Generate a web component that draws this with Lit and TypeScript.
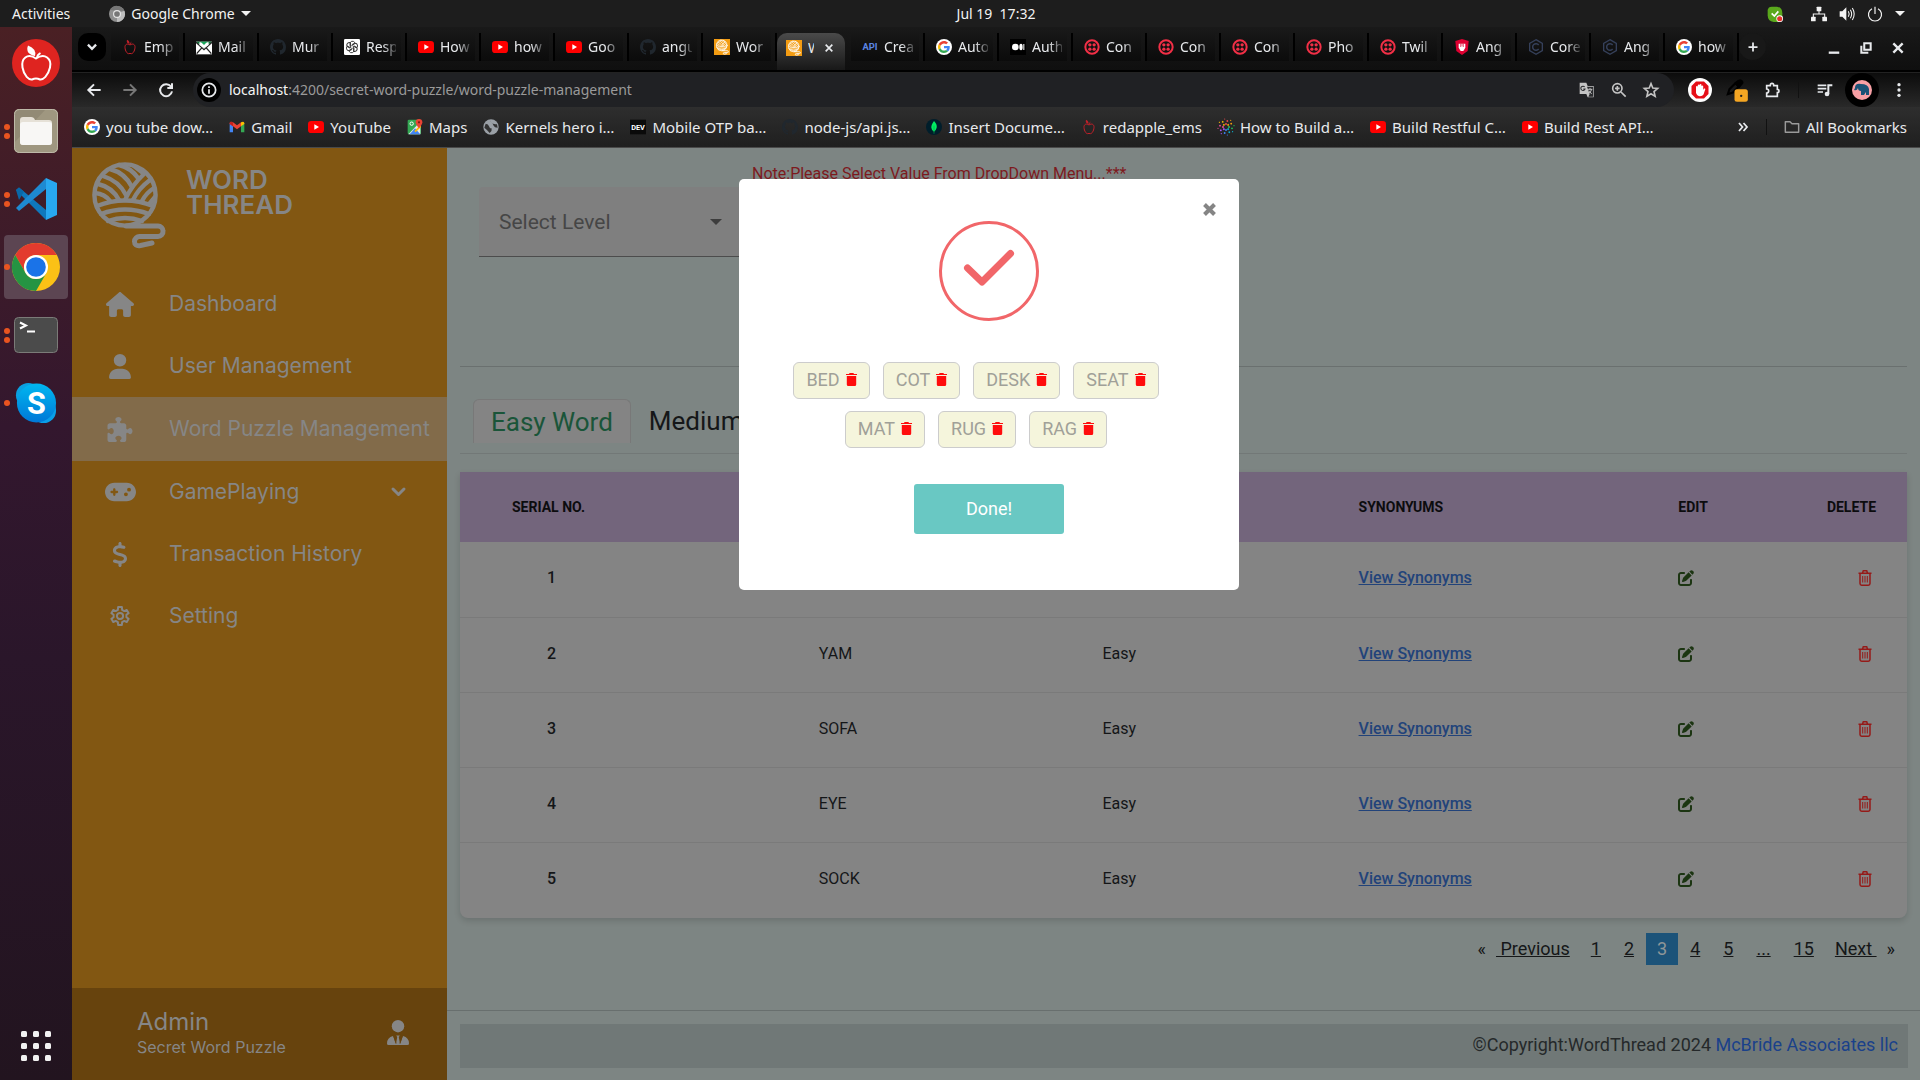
import { LitElement, html, svg, css, TemplateResult } from "lit";
import { customElement, property, state } from "lit/decorators.js";
import { classMap } from "lit/directives/class-map.js";

type Glyph = { box: string; art: TemplateResult };

const gear = (): string => {
  const points: string[] = [];
  for (let tooth = 0; tooth < 6; tooth++) {
    for (const [offset, radius] of [[-19, 7.2], [-12, 10], [12, 10], [19, 7.2]]) {
      const angle = ((tooth * 60 + offset - 90) * Math.PI) / 180;
      points.push(`${(12 + radius * Math.cos(angle)).toFixed(2)} ${(12 + radius * Math.sin(angle)).toFixed(2)}`);
    }
  }
  return `M${points.join("L")}Z`;
};

const yarn = svg`
  <g fill="none" stroke="currentColor" stroke-width="4.4" stroke-linecap="round">
    <circle cx="33" cy="33" r="30.6"/>
    <path d="M5 44Q33 33 61 44M9 52Q33 43 57 52M16 59Q33 53 50 59"/>
    <path d="M3 31Q13 32 18 39M6 22Q20 25 27 38M11 14Q27 19 34 33M18 7Q33 11 40 25M27 3Q39 6 46 16"/>
    <path d="M33 38Q39 24 53 11M41 38Q46 27 58 18M50 39Q54 31 62 26M58 41L63 35M42 4L51 11"/>
    <path d="M34 64H66a5 5 0 0 1 5 5a5 5 0 0 1-5 5.500H48a5 5 0 0 0-5.500 5q0 5 6 4L60 81" stroke-width="5"/>
  </g>`;

const apple = svg`
  <g fill="none" stroke="currentColor" stroke-width="1.500">
    <path d="M12 9C8 6 4 8 4.500 13s3 9 5.500 9q2-.8 4 0c2.500 0 5-4 5.500-9S16 6 12 9Z"/>
    <path d="M12 8q0-2 2-3" />
  </g><path d="M11 7Q6 6 7.500 1Q12 3 11 7Z" fill="currentColor"/>`;

const twilio = svg`<circle cx="12" cy="12" r="10" fill="none" stroke="#f22f46" stroke-width="3"/>
  <g fill="#f22f46"><circle cx="8.800" cy="8.800" r="2.500"/><circle cx="15.200" cy="8.800" r="2.500"/><circle cx="8.800" cy="15.200" r="2.500"/><circle cx="15.200" cy="15.200" r="2.500"/></g>`;

const octocat = "M8 0C3.58 0 0 3.58 0 8c0 3.54 2.29 6.53 5.47 7.59.4.07.55-.17.55-.38 0-.19-.01-.82-.01-1.49-2.01.37-2.53-.49-2.69-.94-.09-.23-.48-.94-.82-1.13-.28-.15-.68-.52-.01-.53.63-.01 1.08.58 1.23.82.72 1.21 1.87.87 2.33.66.07-.52.28-.87.51-1.07-1.78-.2-3.64-.89-3.64-3.95 0-.87.31-1.59.82-2.15-.08-.2-.36-1.02.08-2.12 0 0 .67-.21 2.2.82.64-.18 1.32-.27 2-.27s1.36.09 2 .27c1.53-1.04 2.2-.82 2.2-.82.44 1.1.16 1.92.08 2.12.51.56.82 1.27.82 2.15 0 3.07-1.87 3.75-3.65 3.95.29.25.54.73.54 1.48 0 1.07-.01 1.93-.01 2.2 0 .21.15.46.55.38A8.01 8.01 0 0 0 16 8c0-4.42-3.58-8-8-8z";

const googleG = svg`
  <circle cx="24" cy="24" r="24" fill="#fff"/>
  <g transform="translate(6 6) scale(.75)">
    <path fill="#EA4335" d="M24 9.500c3.540 0 6.710 1.220 9.210 3.600l6.850-6.850C35.900 2.380 30.470 0 24 0 14.620 0 6.510 5.380 2.560 13.220l7.980 6.190C12.430 13.720 17.740 9.500 24 9.500z"/>
    <path fill="#4285F4" d="M46.980 24.550c0-1.570-.15-3.090-.38-4.550H24v9.020h12.940c-.58 2.960-2.260 5.480-4.780 7.180l7.730 6c4.510-4.180 7.090-10.360 7.090-17.650z"/>
    <path fill="#FBBC05" d="M10.530 28.590c-.48-1.450-.76-2.990-.76-4.590s.27-3.140.76-4.590l-7.980-6.190C.92 16.460 0 20.120 0 24c0 3.880.92 7.540 2.560 10.780l7.970-6.190z"/>
    <path fill="#34A853" d="M24 48c6.480 0 11.930-2.130 15.890-5.810l-7.730-6c-2.150 1.450-4.920 2.300-8.160 2.300-6.260 0-11.570-4.220-13.470-9.910l-7.980 6.190C6.510 42.620 14.620 48 24 48z"/>
  </g>`;

const coreC = svg`<path d="M12 1L21.500 6.500V17.500L12 23L2.500 17.500V6.500Z" fill="none" stroke="#35405a" stroke-width="2"/><path d="M16 9a5 5 0 1 0 0 6" fill="none" stroke="#35405a" stroke-width="2.200"/>`;

const glyphs: Record<string, Glyph> = {
  down: { box: "0 0 24 24", art: svg`<path d="M5 8L12 15L19 8" fill="none" stroke="currentColor" stroke-width="4"/>` },
  expand: { box: "0 0 15 10", art: svg`<path d="M2 2L7.500 7.500L13 2" fill="none" stroke="currentColor" stroke-width="3" stroke-linecap="round" stroke-linejoin="round"/>` },
  caret: { box: "0 0 12 6", art: svg`<path d="M0 0H12L6 6Z" fill="currentColor"/>` },
  close: { box: "0 0 24 24", art: svg`<path d="M4 4L20 20M20 4L4 20" fill="none" stroke="currentColor" stroke-width="4"/>` },
  cross: { box: "0 0 13 13", art: svg`<path d="M1.500 1.500L11.500 11.500M11.500 1.500L1.500 11.500" fill="none" stroke="currentColor" stroke-width="4"/>` },
  plus: { box: "0 0 24 24", art: svg`<path d="M12 3V21M3 12H21" fill="none" stroke="currentColor" stroke-width="3.500"/>` },
  minimize: { box: "0 0 24 24", art: svg`<path d="M3 20H21" fill="none" stroke="currentColor" stroke-width="4"/>` },
  restore: { box: "0 0 24 24", art: svg`<path d="M9 4H20V15H9ZM4 8V20H16" fill="none" stroke="currentColor" stroke-width="3.500"/>` },
  back: { box: "0 0 24 24", art: svg`<path d="M22 12H4M12 3.500L3.500 12L12 20.500" fill="none" stroke="currentColor" stroke-width="3"/>` },
  forward: { box: "0 0 24 24", art: svg`<path d="M2 12H20M12 3.500L20.500 12L12 20.500" fill="none" stroke="currentColor" stroke-width="3"/>` },
  reload: { box: "0 0 24 24", art: svg`<path d="M19.500 7A9 9 0 1 0 21 14M21 2V9H14" fill="none" stroke="currentColor" stroke-width="3"/>` },
  info: { box: "0 0 24 24", art: svg`<circle cx="12" cy="12" r="10" fill="none" stroke="currentColor" stroke-width="2.600"/><path d="M12 11V17.500M12 6.500V9" stroke="currentColor" stroke-width="2.600"/>` },
  translate: { box: "0 0 24 24", art: svg`<path d="M1 1H11L13 6H22V23H13L11 18H1Z" fill="#c4c4c4"/><path d="M12 7H21V22H14L16 18Z" fill="#2a2b2e"/><path d="M8.500 7.500A3.200 3.200 0 1 0 9 10.500H6.500" fill="none" stroke="#2a2b2e" stroke-width="1.600"/><path d="M13 11H20M16.500 9V11M19 11Q18 15 14 17M15 13L19 18" fill="none" stroke="#c4c4c4" stroke-width="1.400"/>` },
  zoomin: { box: "0 0 24 24", art: svg`<circle cx="9.500" cy="9.500" r="7" fill="none" stroke="currentColor" stroke-width="2.500"/><path d="M15 15L22 22M9.500 6V13M6 9.500H13" fill="none" stroke="currentColor" stroke-width="2.500"/>` },
  star: { box: "0 0 24 24", art: svg`<path d="M12 2.500L14.700 9L22 9.600L16.500 14.300L18.200 21.500L12 17.600L5.800 21.500L7.500 14.300L2 9.600L9.300 9Z" fill="none" stroke="currentColor" stroke-width="2.400"/>` },
  block: { box: "0 0 24 24", art: svg`<circle cx="12" cy="12" r="12" fill="#fff"/><path d="M8 3.500H16L20.500 8V16L16 20.500H8L3.500 16V8Z" fill="#e60f17"/><path d="M8 12V8.500a1 1 0 0 1 1.800 0V7a1 1 0 0 1 1.800 0V6.500a1 1 0 0 1 1.800 0V8a1 1 0 0 1 1.800 0V12l.8-1.400q1.300-.6 1.300.7L15.500 16.500q-1 1.800-3.500 1.800T8 15Z" fill="#fff"/>` },
  dropper: { box: "0 0 24 24", art: svg`<path d="M1 17L3 11L10 4L14 8L7 15Z" fill="none" stroke="#000" stroke-width="2.500"/><path d="M9 3L13 0Q17-2 19 1T18 6L15 10Z" fill="#000"/><rect x="9" y="11" width="16" height="15" rx="3" fill="#f5a623"/><circle cx="17" cy="19" r="1.400" fill="#222"/>` },
  extension: { box: "0 0 24 24", art: svg`<path d="M4 5.500H9.500V4.500a2.500 2.500 0 0 1 5 0V5.500H20V11a2.500 2.500 0 0 1 0 5V21.500H4V16.500a3 3 0 0 0 0-6Z" fill="none" stroke="currentColor" stroke-width="2.500"/>` },
  queue: { box: "0 0 24 24", art: svg`<path d="M1 5H14M1 10H14M1 15H9" fill="none" stroke="currentColor" stroke-width="2.500"/><path d="M17 18V5H23" fill="none" stroke="currentColor" stroke-width="3"/><circle cx="15" cy="18" r="3.500" fill="currentColor"/>` },
  avatar: { box: "0 0 34 34", art: svg`<circle cx="17" cy="17" r="17" fill="#000"/><circle cx="17" cy="17" r="10" fill="#f8a0a5"/><path d="M10 15q0-5 6-4q7 0 8 5v6h-3v-3l-2 3h-3v-4q-3 0-3-3q-1 3-4 2z" fill="#1a5276"/>` },
  more: { box: "0 0 24 24", art: svg`<g fill="currentColor"><circle cx="12" cy="4" r="2.500"/><circle cx="12" cy="12" r="2.500"/><circle cx="12" cy="20" r="2.500"/></g>` },
  chevrons: { box: "0 0 24 24", art: svg`<path d="M4 4L11 12L4 20M13 4L20 12L13 20" fill="none" stroke="currentColor" stroke-width="3.500"/>` },
  folder: { box: "0 0 24 24", art: svg`<path d="M2 20V4H9L12 7H22V20Z" fill="none" stroke="#9a9a9a" stroke-width="2.200" stroke-linejoin="round"/>` },

  apple: { box: "0 0 24 24", art: svg`<g color="#c2212a">${apple}</g>` },
  mail: { box: "0 0 24 24", art: svg`<rect y="4" width="24" height="19" fill="#fff"/><path d="M0 4H24L12 14Z" fill="#0b7a3b"/><path d="M0 5L12 16L24 5M1 22L9 13M23 22L15 13" fill="none" stroke="#222" stroke-width="2"/><path d="M5 9V5H19V9L12 14Z" fill="#fff"/><path d="M7 4L12 9L17 4" fill="#19a55a"/>` },
  github: { box: "0 0 16 16", art: svg`<path d=${octocat} fill="#20272e"/>` },
  openai: { box: "0 0 24 24", art: svg`<rect width="24" height="24" rx="2" fill="#fff"/><g fill="none" stroke="#333" stroke-width="1.400">${[0, 60, 120, 180, 240, 300].map((turn) => svg`<path transform="rotate(${turn} 12 12)" d="M9 10.300V5.800Q10.500 2.500 14 3.500Q16.500 4.500 16.300 7L11 10.200"/>`)}</g>` },
  youtube: { box: "0 0 24 24", art: svg`<rect y="3" width="24" height="18" rx="5" fill="#f00"/><path d="M9.500 8L16.500 12L9.500 16Z" fill="#fff"/>` },
  yarn: { box: "0 0 24 24", art: svg`<rect width="24" height="24" fill="#f39c12"/><g transform="translate(3 1) scale(.26)" color="#fff">${yarn}</g>` },
  api: { box: "0 0 24 24", art: svg`<text x="12" y="17" text-anchor="middle" class="mark" fill="#5b86e5" font-size="14">API</text>` },
  dev: { box: "0 0 24 24", art: svg`<rect y="1" width="24" height="22" fill="#0a0a0a"/><text x="12" y="16" text-anchor="middle" class="mark" fill="#fff" font-size="11">DEV</text>` },
  google: { box: "0 0 48 48", art: googleG },
  medium: { box: "0 0 24 24", art: svg`<rect width="24" height="24" fill="#000"/><circle cx="8" cy="12" r="5" fill="#fff"/><ellipse cx="16.500" cy="12" rx="2.500" ry="4.800" fill="#fff"/><rect x="20" y="7.500" width="1.500" height="9" fill="#fff"/>` },
  twilio: { box: "0 0 24 24", art: twilio },
  shield: { box: "0 0 24 24", art: svg`<path d="M2 3L12 0L22 3L20.500 18L12 24L3.500 18Z" fill="#dd0031"/><path d="M7 7H17V13L14 18H10L7 13Z" fill="#fff"/><path d="M10 7V12M14 7V12M12 7V11" stroke="#dd0031" stroke-width="1"/>` },
  core: { box: "0 0 24 24", art: coreC },
  gmail: { box: "0 0 24 24", art: svg`<path d="M1 6V20H6V11Z" fill="#4285f4"/><path d="M23 6V20H18V11Z" fill="#34a853"/><path d="M1 6Q2 2.500 6 5L12 9.500L18 5V11L12 15.500L6 11V11L1 7Z" fill="#ea4335"/><path d="M18 5Q22 2.500 23 6V7.500L18 11Z" fill="#fbbc04"/><path d="M1 6Q2 3 6 5V11L1 7.500Z" fill="#c5221f"/>` },
  maps: { box: "0 0 24 24", art: svg`<rect x="1" y="1" width="20" height="22" rx="2" fill="#34a853"/><path d="M2 23L20 4V23Z" fill="#e8eaed"/><path d="M4 23L12 14L20 23Z" fill="#4285f4"/><path d="M21 8L11 18L13 20L21 12Z" fill="#fbbc04"/><circle cx="7" cy="7" r="2.500" fill="none" stroke="#fff" stroke-width="1.500"/><path d="M18 0a5 5 0 0 1 5 5q0 3-5 9q-5-6-5-9a5 5 0 0 1 5-5Z" fill="#ea4335"/><circle cx="18" cy="5" r="1.700" fill="#7b1c13"/>` },
  globe: { box: "0 0 24 24", art: svg`<circle cx="12" cy="12" r="11.500" fill="#9aa0a6"/><path d="M4 7Q8 7 9 11T13 14Q14 18 10 21Q5 15 2 13ZM12 2Q11 6 15 7T21 8L22 13Q17 13 16 10T12 5Z" fill="#333"/>` },
  mongo: { box: "0 0 24 24", art: svg`<circle cx="12" cy="12" r="12" fill="#001e2b"/><path d="M12 3Q17 8 16 13Q15 17 12 19Q8.500 17 8 13T12 3Z" fill="#00ed64"/><path d="M12 10V22" stroke="#00a84a" stroke-width="1"/>` },
  burst: { box: "0 0 24 24", art: svg`${["#e5484d", "#f59e0b", "#22c55e", "#06b6d4", "#3b82f6", "#a855f7", "#ec4899", "#eab308"].map((tone, i) => svg`<g fill=${tone} transform="rotate(${i * 45} 12 12)"><circle cx="12" cy="7.500" r="1.500"/><circle cx="14" cy="3" r="1.400"/><circle cx="10" cy="0" r=".9"/></g>`)}` },

  house: { box: "0 0 576 512", art: svg`<path fill="currentColor" d="M575.800 255.500c0 18-15 32.100-32 32.100h-32l.7 160.200c0 2.700-.2 5.400-.5 8.100V472c0 22.100-17.900 40-40 40H392c-22.100 0-40-17.900-40-40V384c0-17.700-14.300-32-32-32H256c-17.700 0-32 14.300-32 32v88c0 22.100-17.900 40-40 40H104c-22.100 0-40-17.900-40-40V287.600H32c-18 0-32-14-32-32.100c0-9 3-17 10-24L266.400 8c7-7 15-8 22-8s15 2 21 7L564.800 231.500c8 7 12 15 11 24z"/>` },
  user: { box: "0 0 448 512", art: svg`<path fill="currentColor" d="M224 256A128 128 0 1 0 224 0a128 128 0 1 0 0 256zm-45.700 48C79.800 304 0 383.800 0 482.300C0 498.700 13.300 512 29.700 512H418.300c16.400 0 29.700-13.300 29.700-29.700C448 383.800 368.200 304 269.700 304H178.300z"/>` },
  puzzle: { box: "0 0 512 512", art: svg`<path fill="currentColor" d="M192 104.800c0-9.200-5.800-17.300-13.200-22.800C167.200 73.300 160 61.300 160 48c0-26.500 28.700-48 64-48s64 21.500 64 48c0 13.300-7.200 25.300-18.800 34c-7.400 5.500-13.200 13.600-13.200 22.800c0 12.800 10.400 23.200 23.200 23.200H336c26.500 0 48 21.500 48 48v56.800c0 12.800 10.400 23.200 23.200 23.200c9.200 0 17.300-5.800 22.800-13.200c8.700-11.600 20.700-18.800 34-18.800c26.500 0 48 28.700 48 64s-21.500 64-48 64c-13.300 0-25.300-7.200-34-18.800c-5.500-7.400-13.600-13.200-22.800-13.200c-12.800 0-23.200 10.400-23.200 23.200V464c0 26.500-21.500 48-48 48H279.200c-12.800 0-23.200-10.400-23.200-23.200c0-9.200 5.800-17.300 13.200-22.800c11.600-8.700 18.800-20.700 18.800-34c0-26.500-28.700-48-64-48s-64 21.500-64 48c0 13.300 7.200 25.300 18.800 34c7.400 5.500 13.200 13.600 13.200 22.800c0 12.800-10.400 23.200-23.200 23.200H48c-26.500 0-48-21.500-48-48V343.200C0 330.400 10.400 320 23.200 320c9.200 0 17.300 5.800 22.800 13.200C54.700 344.800 66.700 352 80 352c26.500 0 48-28.700 48-64s-21.500-64-48-64c-13.300 0-25.300 7.200-34 18.800C40.500 250.200 32.400 256 23.200 256C10.400 256 0 245.600 0 232.800V176c0-26.500 21.500-48 48-48H168.800c12.800 0 23.200-10.400 23.200-23.200z"/>` },
  gamepad: { box: "0 64 640 384", art: svg`<path fill="currentColor" fill-rule="evenodd" d="M192 64C86 64 0 150 0 256S86 448 192 448H448c106 0 192-86 192-192s-86-192-192-192H192zM496 168a40 40 0 1 1 0 80 40 40 0 1 1 0-80zM392 304a40 40 0 1 1 80 0 40 40 0 1 1 -80 0zM168 200c0-13.300 10.700-24 24-24s24 10.700 24 24v32h32c13.300 0 24 10.700 24 24s-10.700 24-24 24H216v32c0 13.300-10.700 24-24 24s-24-10.700-24-24V280H136c-13.300 0-24-10.700-24-24s10.700-24 24-24h32V200z"/>` },
  dollar: { box: "0 0 320 512", art: svg`<path fill="currentColor" d="M160 0c17.700 0 32 14.300 32 32V67.700c1.600 .2 3.100 .4 4.700 .7c.4 .1 .7 .1 1.100 .2l48 8.800c17.400 3.200 28.900 19.900 25.700 37.200s-19.900 28.900-37.200 25.700l-47.500-8.700c-31.300-4.600-58.900-1.500-78.300 6.200s-27.200 18.300-29 28.100c-2 10.700-.5 16.700 1.200 20.400c1.800 3.900 5.500 8.300 12.800 13.200c16.300 10.700 41.300 17.700 73.700 26.300l2.900 .8c28.600 7.600 63.600 16.800 89.600 33.800c14.200 9.300 27.600 21.900 35.900 39.500c8.500 17.900 10.300 37.900 6.400 59.200c-6.900 38-33.100 63.400-65.600 76.700c-13.700 5.600-28.600 9.200-44.400 11V480c0 17.700-14.300 32-32 32s-32-14.300-32-32V445.100c-24.400-3.800-66-14.500-93-26.500c-16.100-7.200-23.400-26.100-16.200-42.200s26.100-23.400 42.200-16.200c20.900 9.300 55.300 18.500 75.200 21.600c31.900 4.700 58.200 2 76-5.300c16.900-6.900 24.600-16.900 26.800-28.900c1.900-10.600 .4-16.700-1.300-20.400c-1.900-4-5.600-8.400-13-13.300c-16.400-10.700-41.500-17.700-74-26.300l-2.800-.7C119.400 279.300 84.400 270 58.400 253c-14.200-9.300-27.500-22-35.800-39.600c-8.400-17.900-10.100-37.900-6.100-59.200C23.700 116 52.300 91.200 84.800 78.300c13.300-5.300 27.900-8.900 43.200-11V32c0-17.700 14.300-32 32-32z"/>` },
  gear: { box: "1 1 22 22", art: svg`<path d=${gear()} fill="none" stroke="currentColor" stroke-width="2.200" stroke-linejoin="round"/><circle cx="12" cy="12" r="3.400" fill="none" stroke="currentColor" stroke-width="2.200"/>` },
  tie: { box: "0 0 22 25", art: svg`<circle cx="11" cy="6.200" r="6.200" fill="currentColor"/><path d="M6 16L9 24L10.200 17L9.200 15.500H12.800L11.800 17L13 24L16 16Q22 17.500 22 23.500Q22 25 20.500 25H1.500Q0 25 0 23.500Q0 17.500 6 16Z" fill="currentColor"/><path d="M6.800 16L9 23.500M15.200 16L13 23.500" stroke="#67430d" stroke-width=".8"/>` },
  pen: { box: "0 0 512 512", art: svg`<path fill="currentColor" d="M471.600 21.700c-21.900-21.900-57.300-21.900-79.200 0L362.300 51.700l97.900 97.900 30.100-30.100c21.900-21.900 21.900-57.300 0-79.200L471.600 21.700zm-299.200 220c-6.100 6.100-10.800 13.600-13.500 21.900l-29.600 88.800c-2.900 8.600-.6 18.100 5.800 24.600s15.900 8.700 24.600 5.800l88.800-29.600c8.200-2.700 15.700-7.400 21.900-13.500L437.700 172.300 339.700 74.300 172.400 241.700zM96 64C43 64 0 107 0 160V416c0 53 43 96 96 96H352c53 0 96-43 96-96V320c0-17.700-14.300-32-32-32s-32 14.300-32 32v96c0 17.700-14.300 32-32 32H96c-17.700 0-32-14.300-32-32V160c0-17.700 14.300-32 32-32h96c17.700 0 32-14.300 32-32s-14.300-32-32-32H96z"/>` },
  bin: { box: "0 0 14 16", art: svg`<path d="M.5 3.300H13.500M2 3.300V13.500Q2 15.200 3.700 15.200H10.300Q12 15.200 12 13.500V3.300M4.500 3L5.300 .8H8.700L9.500 3" fill="none" stroke="currentColor" stroke-width="1.500"/><path d="M4.700 6V12.500M7 6V12.500M9.300 6V12.500" stroke="currentColor" stroke-width="1"/>` },
  trash: { box: "0 0 11 13", art: svg`<path d="M0 .9H3L3.600 0H7.400L8 .9H11V2H0ZM.8 3H10.200V11.500Q10.200 13 8.700 13H2.300Q.8 13 .8 11.500Z" fill="currentColor"/>` },
  check: { box: "0 0 50 36", art: svg`<path d="M3.500 18L18 32L46.500 3.500" fill="none" stroke="currentColor" stroke-width="7" stroke-linecap="round" stroke-linejoin="round"/>` },
  logo: { box: "0 0 74 87", art: yarn },

  chromeGray: { box: "0 0 48 48", art: svg`<circle cx="24" cy="24" r="24" fill="#8f8f8f"/><path d="M24 24L46 14A24 24 0 0 1 24 48Z" fill="#bdbdbd"/><path d="M3 12A24 24 0 0 1 46 14H24Z" fill="#777"/><circle cx="24" cy="24" r="12" fill="#e5e5e5"/><circle cx="24" cy="24" r="8.500" fill="#777"/>` },
  skypeTray: { box: "0 0 24 24", art: svg`<path d="M7 1H15Q23 2 23 11V20L20 24H10Q1 23 1 14V6Q2 1 7 1Z" fill="#5aa81c"/><path d="M7 11L11 15L17 8" fill="none" stroke="#fff" stroke-width="2.500"/><circle cx="19" cy="19" r="5" fill="#fff"/><circle cx="19" cy="19" r="3.800" fill="#e5322d"/>` },
  network: { box: "0 0 24 24", art: svg`<g fill="#f2f2f2"><rect x="8.500" y="1" width="7" height="7" rx="1"/><rect x="0" y="16" width="7" height="7" rx="1"/><rect x="17" y="16" width="7" height="7" rx="1"/></g><path d="M12 7V12M3.500 17V12H20.500V17" fill="none" stroke="#f2f2f2" stroke-width="1.600"/>` },
  volume: { box: "0 0 24 24", art: svg`<path d="M1 8H5L11 2V22L5 16H1Z" fill="#f2f2f2"/><path d="M14 8Q16.500 12 14 16M17 5.500Q21 12 17 18.500M20 3Q25.500 12 20 21" fill="none" stroke="#f2f2f2" stroke-width="1.600"/>` },
  power: { box: "0 0 24 24", art: svg`<path d="M7.500 4A9.800 9.800 0 1 0 16.500 4M12 1V12" fill="none" stroke="#f2f2f2" stroke-width="1.800"/>` },

  dockApple: { box: "0 0 48 48", art: svg`<circle cx="24" cy="24" r="24" fill="#df2420"/><g fill="none" stroke="#fff" stroke-width="2"><path d="M24 19.500C15 13.500 9 20 10.500 28.500S17 41 20 40.500Q24 38.500 28 40.500C31 41 36 37 38 28.500S33 13.500 24 19.500Z"/><path d="M25 19q0-3 3.500-5"/></g><path d="M23 17Q13 15 16 6.500Q25 10 23 17Z" fill="#fff"/>` },
  dockFiles: { box: "0 0 48 48", art: svg`<rect x="2" y="2" width="44" height="44" rx="5" fill="#9f9780"/><path d="M2 8Q2 2 8 2H34L2 36Z" fill="#928a75"/><rect x="2.500" y="2.500" width="43" height="43" rx="5" fill="none" stroke="#beb9a8"/><path d="M8 13Q8 10 11 10H19Q22 10 23 13H37Q40 13 40 16V35Q40 38 37 38H11Q8 38 8 35Z" fill="#e6e1d7"/><rect x="8" y="15" width="32" height="23" rx="3" fill="#f8f7f5"/>` },
  dockCode: { box: "0 0 42 42", art: svg`<path d="M1 12L4 9.500L31 32V42Z" fill="#0f78bd"/><path d="M1 30L4 33L31 11V0Z" fill="#1e8ad2"/><path d="M1 12L4 9.500L9 13.500L4 22Z" fill="#0a68a8"/><path d="M31 0L42 5V37L31 42Z" fill="#28a8f0"/>` },
  dockChrome: { box: "0 0 48 48", art: svg`<circle cx="24" cy="24" r="24" fill="#fbc116"/><path d="M3.200 12A24 24 0 0 1 44.800 12H24A12 12 0 0 0 13.600 30Z" fill="#e33b2e"/><path d="M3.200 12A24 24 0 0 0 24 48L34.400 30A12 12 0 0 1 13.600 30Z" fill="#259443"/><circle cx="24" cy="24" r="12" fill="#fff"/><circle cx="24" cy="24" r="9.800" fill="#1a73e8"/>` },
  dockTerminal: { box: "0 0 48 48", art: svg`<rect x="2.500" y="6.500" width="43" height="35" rx="4" fill="#4b4b4b" stroke="#7b7b78"/><path d="M8 11.500L14 14.500L8 17.500M15 20.500H23" fill="none" stroke="#fff" stroke-width="2"/>` },
  dockSkype: { box: "0 0 44 44", art: svg`<circle cx="14" cy="14" r="13" fill="#0aa0e0"/><circle cx="30" cy="30" r="13" fill="#0a9fe8"/><circle cx="22.500" cy="22" r="20.500" fill="url(#sky)"/><defs><linearGradient id="sky" x1="0" y1="0" x2="0" y2="1"><stop offset="0" stop-color="#00b7f0"/><stop offset="1" stop-color="#0078d7"/></linearGradient></defs><text x="22.500" y="33" text-anchor="middle" class="mark" fill="#fff" font-size="32">S</text>` },
  apps: { box: "0 0 30 30", art: svg`${[0, 12, 24].map((y) => [0, 12, 24].map((x) => svg`<rect x=${x} y=${y} width="6" height="6" rx="1.500" fill="#f2f2f2"/>`))}` },
};

@customElement("ui-glyph")
export class UiGlyph extends LitElement {
  @property() name = "";
  static styles = css`
    :host { display: inline-flex; flex: none; width: 16px; height: 16px; }
    svg { display: block; width: 100%; height: 100%; overflow: visible; }
    .mark { font-family: "Roboto", sans-serif; font-weight: 700; }
  `;
  render() {
    const glyph = glyphs[this.name];
    return html`<svg viewBox=${glyph.box} aria-hidden="true">${glyph.art}</svg>`;
  }
}

@customElement("desktop-bar")
export class DesktopBar extends LitElement {
  static styles = css`
    :host { display: grid; grid-template-columns: 1fr auto 1fr; align-items: center; height: 27px; padding-left: 72px; background: #1d1d1d; color: #f2f2f2; font: 14px/20px "Noto Sans", sans-serif; }
    .left, .right { display: flex; align-items: center; }
    .left { margin-left: -60px; gap: 39px; }
    .app { display: flex; align-items: center; gap: 6px; }
    .right { justify-content: flex-end; gap: 12px; padding-right: 15px; }
    .tray { margin-right: 16px; }
    .arrow { width: 10px; height: 5px; }
    button { all: unset; }
  `;
  render() {
    return html`
      <div class="left">
        <button>Activities</button>
        <button class="app"><ui-glyph name="chromeGray"></ui-glyph>Google Chrome<ui-glyph class="arrow" name="caret"></ui-glyph></button>
      </div>
      <time>Jul 19&nbsp; 17:32</time>
      <div class="right">
        <ui-glyph class="tray" name="skypeTray"></ui-glyph>
        <ui-glyph name="network"></ui-glyph>
        <ui-glyph name="volume"></ui-glyph>
        <ui-glyph name="power"></ui-glyph>
        <ui-glyph class="arrow" name="caret"></ui-glyph>
      </div>`;
  }
}

@customElement("desktop-dock")
export class DesktopDock extends LitElement {
  static styles = css`
    :host { display: flex; flex-direction: column; align-items: center; gap: 4px; padding: 4px 0 2px; background: linear-gradient(#4a2024, #33172e 38%, #2a162a 60%, #22141f); }
    button { all: unset; display: grid; grid-template-columns: 8px 1fr 8px; align-items: center; justify-items: center; box-sizing: border-box; width: 64px; height: 64px; border-radius: 4px; }
    button.current { background: #5c4552; }
    .dots { display: flex; flex-direction: column; gap: 3px; margin-left: -2px; }
    .dot { width: 6px; height: 6px; border-radius: 3px; background: #e95420; }
    .icon { width: 48px; height: 48px; }
    .apps { margin-top: auto; }
    .small { width: 30px; height: 30px; }
    .mid { width: 42px; height: 42px; }
  `;
  items = [
    { icon: "dockApple", name: "Red Apple", windows: 0, size: "icon" },
    { icon: "dockFiles", name: "Files", windows: 2, size: "icon" },
    { icon: "dockCode", name: "Code", windows: 2, size: "mid" },
    { icon: "dockChrome", name: "Chrome", windows: 1, size: "icon" },
    { icon: "dockTerminal", name: "Terminal", windows: 2, size: "icon" },
    { icon: "dockSkype", name: "Skype", windows: 1, size: "mid" },
  ];
  render() {
    return html`
      ${this.items.map((item) => html`
        <button class=${classMap({ current: item.icon === "dockChrome" })} aria-label=${item.name}>
          <span class="dots">${Array.from({ length: item.windows }, () => html`<i class="dot"></i>`)}</span>
          <ui-glyph class=${item.size} name=${item.icon}></ui-glyph>
        </button>`)}
      <button class="apps" aria-label="Show applications"><span></span><ui-glyph class="small" name="apps"></ui-glyph></button>`;
  }
}

@customElement("browser-chrome")
export class BrowserChrome extends LitElement {
  static styles = css`
    :host { display: block; color: #e8eaed; font: 14px/20px "Noto Sans", sans-serif; background: #000; }
    button { all: unset; display: inline-flex; align-items: center; justify-content: center; flex: none; }
    a { color: inherit; text-decoration: none; }
    .strip { display: flex; align-items: flex-start; height: 37px; padding: 6px 11px 0 6px; background: linear-gradient(#191919, #0f0f0f); border-bottom: 1px solid #000; }
    .search { width: 28px; height: 28px; border-radius: 10px; background: #000; margin-right: 5px; }
    .search ui-glyph { width: 14px; height: 14px; }
    .tab { display: flex; align-items: center; box-sizing: border-box; gap: 6px; flex: 0 1 74px; height: 28px; padding-left: 11px; border-right: 2px solid #000; background: linear-gradient(#171717, #0b0b0b); background-size: 68px 28px; background-repeat: no-repeat; }
    .tab span { max-width: 30px; overflow: hidden; white-space: nowrap; mask-image: linear-gradient(to right, #000 17px, rgba(0, 0, 0, 0.2) 30px); }
    .tab.active { height: 37px; padding: 0 11px 8px 9px; margin-right: 6px; flex-basis: 68px; border: 0; border-radius: 10px 10px 0 0; background: linear-gradient(#4a4a4a, #181818); }
    .tab.active span { width: 6px; mask-image: none; }
    .tab.active button { margin-left: auto; }
    .tab.active button ui-glyph { width: 10px; height: 10px; }
    .plus { width: 27px; height: 27px; border-radius: 14px; background: #181818; }
    .plus ui-glyph { width: 12px; height: 12px; }
    .window { display: flex; gap: 18px; margin: 8px 4px 0 auto; }
    .window ui-glyph { width: 14px; height: 14px; }
    .bar { display: flex; align-items: center; height: 34px; margin-top: 1px; padding: 0 13px 0 14px; background: linear-gradient(#0c0c0c, #292929); border-top: 1px solid #222; }
    .nav { display: flex; gap: 20px; margin-right: 19px; }
    .forward { color: #777; }
    .address { flex: 1; display: flex; align-items: center; box-sizing: border-box; height: 34px; padding: 0 15px 0 4px; border-radius: 17px; background: #202124; }
    .badge { width: 24px; height: 24px; border-radius: 12px; background: #000; margin-right: 8px; }
    .url { flex: 1; color: #9a9a9a; outline: none; }
    .url b { color: #f5f5f5; font-weight: 400; }
    .tools { display: flex; gap: 16px; color: #c4c4c4; }
    .extras { display: flex; align-items: center; gap: 15px; margin-left: 14px; }
    .extras .big { width: 24px; height: 24px; }
    .extras .mid { width: 20px; height: 20px; margin-right: 2px; }
    .extras .face { width: 34px; height: 34px; margin: 0 -3px; }
    .rule { width: 1px; height: 16px; background: #111; }
    .extras .rule { margin: 0 3px; }
    .marks { display: flex; align-items: center; height: 40px; padding: 0 13px 0 12px; background: linear-gradient(#2e2e2e, #1f1f1f); border-bottom: 1px solid #4a4a4a; font-size: 15px; white-space: nowrap; }
    .mark { display: flex; align-items: center; gap: 6px; margin-right: 16px; }
    .rest { display: flex; align-items: center; gap: 17px; margin-left: auto; }
    .rest ui-glyph { flex: none; }
    .rest .more { width: 12px; height: 12px; }
    .rest .mark { margin: 0; gap: 6px; }
  `;
  tabs: [string, string][] = [
    ["apple", "Emp"], ["mail", "Mail"], ["github", "Mur"], ["openai", "Resp"], ["youtube", "How"], ["youtube", "how"],
    ["youtube", "Goo"], ["github", "angu"], ["yarn", "Wor"], ["yarn", "W"], ["api", "Crea"], ["google", "Auto"],
    ["medium", "Auth"], ["twilio", "Con"], ["twilio", "Con"], ["twilio", "Con"], ["twilio", "Pho"], ["twilio", "Twil"],
    ["shield", "Ang"], ["core", "Core"], ["core", "Ang"], ["google", "how"],
  ];
  bookmarks: [string, string][] = [
    ["google", "you tube dow…"], ["gmail", "Gmail"], ["youtube", "YouTube"], ["maps", "Maps"], ["globe", "Kernels hero i…"], ["dev", "Mobile OTP ba…"],
    ["github", "node-js/api.js…"], ["mongo", "Insert Docume…"], ["apple", "redapple_ems"], ["burst", "How to Build a…"], ["youtube", "Build Restful C…"], ["youtube", "Build Rest API…"],
  ];
  render() {
    return html`
      <div class="strip">
        <button class="search" aria-label="Search tabs"><ui-glyph name="down"></ui-glyph></button>
        ${this.tabs.map(([icon, title], index) => index === 9
          ? html`<div class="tab active"><ui-glyph name=${icon}></ui-glyph><span>${title}</span><button aria-label="Close tab"><ui-glyph name="close"></ui-glyph></button></div>`
          : html`<div class="tab"><ui-glyph name=${icon}></ui-glyph><span>${title}</span></div>`)}
        <button class="plus" aria-label="New tab"><ui-glyph name="plus"></ui-glyph></button>
        <div class="window">
          <button aria-label="Minimize"><ui-glyph name="minimize"></ui-glyph></button>
          <button aria-label="Restore"><ui-glyph name="restore"></ui-glyph></button>
          <button aria-label="Close"><ui-glyph name="close"></ui-glyph></button>
        </div>
      </div>
      <div class="bar">
        <div class="nav">
          <button aria-label="Back"><ui-glyph name="back"></ui-glyph></button>
          <button class="forward" aria-label="Forward"><ui-glyph name="forward"></ui-glyph></button>
          <button aria-label="Reload"><ui-glyph name="reload"></ui-glyph></button>
        </div>
        <div class="address">
          <button class="badge" aria-label="Site information"><ui-glyph name="info"></ui-glyph></button>
          <div class="url" role="textbox" contenteditable="true" spellcheck="false" aria-label="Address"><b>localhost</b>:4200/secret-word-puzzle/word-puzzle-management</div>
          <div class="tools">
            <button aria-label="Translate"><ui-glyph name="translate"></ui-glyph></button>
            <button aria-label="Zoom"><ui-glyph name="zoomin"></ui-glyph></button>
            <button aria-label="Bookmark"><ui-glyph name="star"></ui-glyph></button>
          </div>
        </div>
        <div class="extras">
          <button aria-label="Ad blocker"><ui-glyph class="big" name="block"></ui-glyph></button>
          <button aria-label="Color picker"><ui-glyph class="mid" name="dropper"></ui-glyph></button>
          <button aria-label="Extensions"><ui-glyph name="extension"></ui-glyph></button>
          <i class="rule"></i>
          <button aria-label="Media"><ui-glyph name="queue"></ui-glyph></button>
          <button aria-label="Profile"><ui-glyph class="face" name="avatar"></ui-glyph></button>
          <button aria-label="Menu"><ui-glyph name="more"></ui-glyph></button>
        </div>
      </div>
      <div class="marks">
        ${this.bookmarks.map(([icon, title]) => html`<a class="mark" href="#"><ui-glyph name=${icon}></ui-glyph>${title}</a>`)}
        <div class="rest">
          <button aria-label="More bookmarks"><ui-glyph class="more" name="chevrons"></ui-glyph></button>
          <i class="rule"></i>
          <a class="mark" href="#"><ui-glyph name="folder"></ui-glyph>All Bookmarks</a>
        </div>
      </div>`;
  }
}

@customElement("side-menu")
export class SideMenu extends LitElement {
  static styles = css`
    :host { display: flex; flex-direction: column; background: #825712; color: #868686; font: 21px/30px "Inter", sans-serif; }
    .brand { display: flex; gap: 20px; padding: 14px 20px 0; height: 111px; }
    .brand ui-glyph { width: 74px; height: 87px; }
    h1 { margin: 5px 0 0; font-size: 26px; line-height: 25px; font-weight: 600; }
    a { display: grid; grid-template-columns: 50px 1fr 50px; align-items: center; justify-items: center; gap: 24px; height: 62px; padding: 0 24px 0 23px; color: inherit; text-decoration: none; white-space: nowrap; }
    a span { justify-self: start; }
    a.current { height: 64px; background: #826b4a; }
    .icon { width: 28px; height: 25px; }
    .wide { width: 31px; height: 20px; }
    .slim { width: 20px; height: 20px; }
    .arrow { width: 15px; height: 10px; }
    .admin { display: flex; align-items: center; justify-content: space-between; height: 92px; margin-top: auto; padding: 0 38px 4px 65px; background: #67430d; box-sizing: border-box; }
    .admin strong { display: block; font-size: 24px; line-height: 30px; font-weight: 400; }
    .admin small { display: block; font-size: 16px; line-height: 20px; font-weight: 400; }
    .admin ui-glyph { width: 22px; height: 25px; }
  `;
  items = [
    ["house", "Dashboard", "icon"], ["user", "User Management", "icon"], ["puzzle", "Word Puzzle Management", "icon"],
    ["gamepad", "GamePlaying", "wide"], ["dollar", "Transaction History", "icon"], ["gear", "Setting", "slim"],
  ];
  render() {
    return html`
      <div class="brand"><ui-glyph name="logo"></ui-glyph><h1>WORD<br>THREAD</h1></div>
      <nav>
        ${this.items.map(([icon, label, size]) => html`
          <a href="#" class=${classMap({ current: icon === "puzzle" })}>
            <ui-glyph class=${size} name=${icon}></ui-glyph>
            <span>${label}</span>
            ${icon === "gamepad" ? html`<ui-glyph class="arrow" name="expand"></ui-glyph>` : ""}
          </a>`)}
      </nav>
      <div class="admin">
        <div><strong>Admin</strong><small>Secret Word Puzzle</small></div>
        <ui-glyph name="tie"></ui-glyph>
      </div>`;
  }
}

@customElement("word-table")
export class WordTable extends LitElement {
  static styles = css`
    :host { display: block; padding-bottom: 1px; border-radius: 0 0 8px 8px; box-shadow: 0 3px 6px rgba(0, 0, 0, 0.14); background: #848484; color: #141618; font: 16px/20px "Roboto", sans-serif; }
    table { width: 100%; table-layout: fixed; border-collapse: collapse; text-align: left; }
    .c1 { width: 24.8%; }
    .c2 { width: 19.6%; }
    .c3 { width: 17.7%; }
    .c4 { width: 22.1%; }
    .c5 { width: 8%; }
    th, td { padding: 0; font-weight: 400; }
    thead th { height: 70px; background: #73657c; color: #0c0c0e; font-size: 14px; font-weight: 700; }
    tbody th, tbody td { height: 75px; box-sizing: border-box; padding-bottom: 2px; border-bottom: 1px solid #7a7a7a; }
    tbody tr:last-child > * { border-bottom: 0; }
    thead th:first-child { padding-left: 52px; }
    tbody th { padding-left: 87px; font-weight: 500; }
    thead th:last-child { text-align: right; padding-right: 31px; }
    td:last-child { text-align: right; padding-right: 35px; }
    a { color: #22437a; font-weight: 500; }
    button { all: unset; display: inline-flex; vertical-align: top; padding: 2px 0; }
    .pen { color: #1c3512; }
    .bin { color: #951a18; width: 14px; height: 16px; }
  `;
  rows = ["", "YAM", "SOFA", "EYE", "SOCK"];
  render() {
    return html`
      <table>
        <colgroup><col class="c1"><col class="c2"><col class="c3"><col class="c4"><col class="c5"><col></colgroup>
        <thead><tr><th>SERIAL NO.</th><th></th><th></th><th>SYNONYUMS</th><th>EDIT</th><th>DELETE</th></tr></thead>
        <tbody>
          ${this.rows.map((word, index) => html`
            <tr>
              <th scope="row">${index + 1}</th>
              <td>${word}</td>
              <td>${word ? "Easy" : ""}</td>
              <td><a href="#">View Synonyms</a></td>
              <td><button aria-label="Edit"><ui-glyph class="pen" name="pen"></ui-glyph></button></td>
              <td><button aria-label="Delete"><ui-glyph class="bin" name="bin"></ui-glyph></button></td>
            </tr>`)}
        </tbody>
      </table>`;
  }
}

@customElement("synonym-dialog")
export class SynonymDialog extends LitElement {
  @state() words = ["BED", "COT", "DESK", "SEAT", "MAT", "RUG", "RAG"];
  static styles = css`
    :host { position: absolute; inset: 0; display: flex; justify-content: center; align-items: flex-start; padding: 31px 14px 0 0; font: 18px/25px "Roboto", sans-serif; }
    .box { position: relative; display: flex; flex-direction: column; align-items: center; box-sizing: border-box; width: 500px; padding: 42px 40px 56px; border-radius: 5px; background: #fff; }
    button { all: unset; display: inline-flex; }
    .close { position: absolute; top: 24px; right: 23px; color: #858585; }
    .close ui-glyph { width: 13px; height: 13px; }
    .ring { display: flex; justify-content: center; box-sizing: border-box; width: 100px; height: 100px; padding-top: 26px; border: 3px solid #f16669; border-radius: 50px; color: #f16669; }
    .ring ui-glyph { width: 50px; height: 36px; }
    ul { display: flex; flex-wrap: wrap; justify-content: center; gap: 12px 13px; margin: 41px 26px 36px 0; padding: 0; list-style: none; }
    li { display: flex; align-items: center; gap: 6px; padding: 4px 12px 6px; border: 1px solid #ccc; border-radius: 6px; background: #f5f5dc; color: #a0a098; }
    li ui-glyph { width: 11px; height: 13px; color: #ff0d0d; }
    .done { justify-content: center; width: 150px; padding: 12px 0 13px; border-radius: 3px; background: #69c8c3; color: #fff; }
  `;
  render() {
    return html`
      <section class="box" role="dialog" aria-label="Synonyms">
        <button class="close" aria-label="Close"><ui-glyph name="cross"></ui-glyph></button>
        <div class="ring"><ui-glyph name="check"></ui-glyph></div>
        <ul>
          ${this.words.map((word) => html`
            <li>${word}<button aria-label="Remove ${word}" @click=${() => (this.words = this.words.filter((w) => w !== word))}><ui-glyph name="trash"></ui-glyph></button></li>`)}
        </ul>
        <button class="done">Done!</button>
      </section>`;
  }
}

@customElement("app-root")
export class AppRoot extends LitElement {
  static styles = css`
    :host { display: grid; grid-template: auto 1fr / 72px minmax(0, 1fr); min-height: 100vh; background: #1d1d1d; }
    desktop-bar { grid-column: 1 / -1; }
    .window { display: flex; flex-direction: column; }
    .page { position: relative; flex: 1; display: grid; grid-template-columns: 375px minmax(0, 1fr); }
    main { display: flex; flex-direction: column; background: #7d8583; color: #151718; font: 18px/32px "Roboto", sans-serif; }
    .content { padding: 14px 13px 0; }
    .note { margin: 0 0 0 292px; color: #7d1a1e; font-size: 16px; line-height: 24px; }
    .field { display: flex; align-items: center; width: 262px; height: 69px; margin: 1px 0 109px 19px; border-bottom: 1px solid #4c4c4c; border-radius: 4px 4px 0 0; background: #7f7f7f; }
    select { appearance: none; width: 100%; height: 100%; padding: 0 20px; border: 0; background: transparent; color: #464646; font: 21px/28px "Roboto", sans-serif; }
    .field ui-glyph { width: 12px; height: 6px; margin: 0 19px 0 -31px; color: #3d3d3d; pointer-events: none; }
    .tabs { display: flex; padding: 32px 13px 10px; border-top: 1px solid #6a706f; border-bottom: 1px solid #727877; margin-bottom: 18px; }
    .tabs button { all: unset; box-sizing: border-box; height: 44px; padding: 0 17px; border: 1px solid transparent; font-size: 26px; line-height: 42px; }
    .tabs .current { border-color: #787878; border-bottom: 0; border-radius: 6px 6px 0 0; background: #848484; color: #1a5539; }
    .pages { display: flex; justify-content: flex-end; align-items: center; gap: 1px; margin: 15px 12px 0 0; }
    .pages a { padding: 0 11px; color: #151718; }
    .pages .current { background: #1c5379; color: #8f9698; text-decoration: none; }
    .pages .ends { padding: 0 9px; }
    footer { margin-top: auto; padding: 13px 12px 12px 13px; border-top: 1px solid #686f6e; }
    .legal { padding: 7px 10px 9px; background: #707877; color: #25292a; line-height: 28px; text-align: right; }
    .legal a { color: #1a418a; text-decoration: none; }
  `;
  render() {
    return html`
      <desktop-bar></desktop-bar>
      <desktop-dock></desktop-dock>
      <div class="window">
        <browser-chrome></browser-chrome>
        <div class="page">
          <side-menu></side-menu>
          <main>
            <div class="content">
              <p class="note">Note:Please Select Value From DropDown Menu...***</p>
              <div class="field">
                <select aria-label="Select Level"><option>Select Level</option></select>
                <ui-glyph name="caret"></ui-glyph>
              </div>
              <div class="tabs">
                <button class="current">Easy Word</button>
                <button>Medium</button>
              </div>
              <word-table></word-table>
              <nav class="pages" aria-label="Pages">
                «<a class="ends" href="#">&nbsp;Previous</a><a href="#">1</a><a href="#">2</a><a class="current" href="#">3</a><a href="#">4</a><a href="#">5</a><a href="#">...</a><a href="#">15</a><a class="ends" href="#">Next&nbsp;</a>»
              </nav>
            </div>
            <footer><div class="legal">©Copyright:WordThread 2024 <a href="#">McBride Associates llc</a></div></footer>
          </main>
          <synonym-dialog></synonym-dialog>
        </div>
      </div>`;
  }
}
